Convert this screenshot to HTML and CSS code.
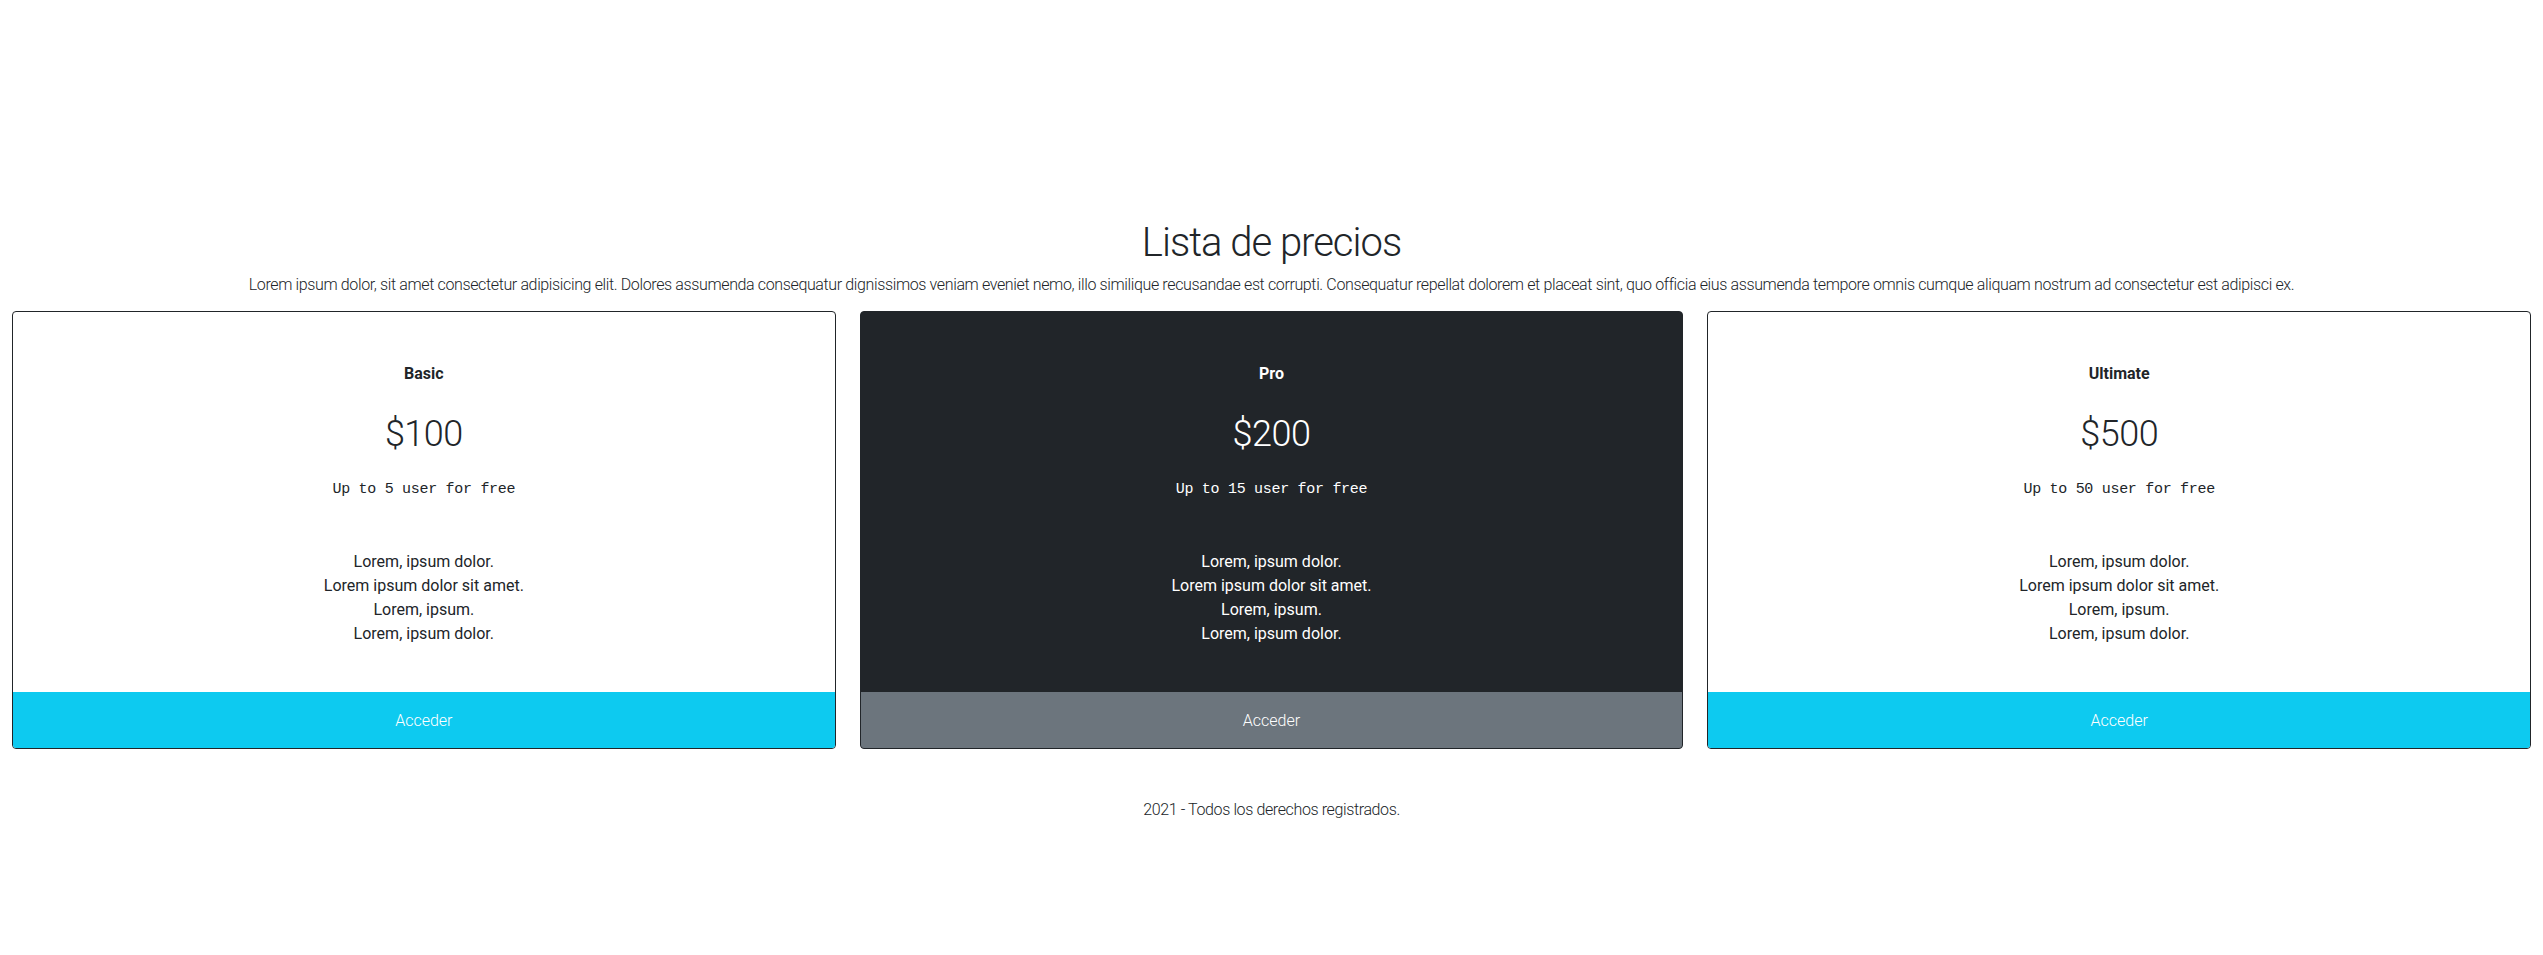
FILE: index.html
```html
<!DOCTYPE html>
<html lang="es">
<head>
<meta charset="utf-8">
<title>Lista de precios</title>
<link rel="stylesheet" href="styles.css">
</head>
<body>
<main class="pricing">
  <header class="intro">
    <h1 class="intro-title">Lista de precios</h1>
    <p class="intro-lead">Lorem ipsum dolor, sit amet consectetur adipisicing elit. Dolores assumenda consequatur dignissimos veniam eveniet nemo, illo similique recusandae est corrupti. Consequatur repellat dolorem et placeat sint, quo officia eius assumenda tempore omnis cumque aliquam nostrum ad consectetur est adipisci ex.</p>
  </header>
  <section class="plans">
    <article class="plan">
      <div class="plan-body">
        <p class="plan-name">Basic</p>
        <p class="plan-price">$100</p>
        <p class="plan-users">Up to 5 user for free</p>
        <ul class="plan-features">
          <li>Lorem, ipsum dolor.</li>
          <li>Lorem ipsum dolor sit amet.</li>
          <li>Lorem, ipsum.</li>
          <li>Lorem, ipsum dolor.</li>
        </ul>
      </div>
      <a class="plan-btn plan-btn-info" href="#">Acceder</a>
    </article>
    <article class="plan plan-dark">
      <div class="plan-body">
        <p class="plan-name">Pro</p>
        <p class="plan-price">$200</p>
        <p class="plan-users">Up to 15 user for free</p>
        <ul class="plan-features">
          <li>Lorem, ipsum dolor.</li>
          <li>Lorem ipsum dolor sit amet.</li>
          <li>Lorem, ipsum.</li>
          <li>Lorem, ipsum dolor.</li>
        </ul>
      </div>
      <a class="plan-btn plan-btn-secondary" href="#">Acceder</a>
    </article>
    <article class="plan">
      <div class="plan-body">
        <p class="plan-name">Ultimate</p>
        <p class="plan-price">$500</p>
        <p class="plan-users">Up to 50 user for free</p>
        <ul class="plan-features">
          <li>Lorem, ipsum dolor.</li>
          <li>Lorem ipsum dolor sit amet.</li>
          <li>Lorem, ipsum.</li>
          <li>Lorem, ipsum dolor.</li>
        </ul>
      </div>
      <a class="plan-btn plan-btn-info" href="#">Acceder</a>
    </article>
  </section>
  <footer class="site-footer">2021 - Todos los derechos registrados.</footer>
</main>
</body>
</html>
```

FILE: styles.css
```css
* { box-sizing: border-box; }

body {
  margin: 0;
  font-family: Roboto, "Liberation Sans", sans-serif;
  font-size: 16px;
  line-height: 1.5;
  color: #212529;
  background: #fff;
}

.intro {
  padding-top: 219px;
  text-align: center;
}

.intro-title {
  margin: 0 0 6px;
  font-size: 40px;
  line-height: 48px;
  font-weight: 300;
  letter-spacing: -1px;
}

.intro-lead {
  margin: 0 0 14px;
  font-weight: 300;
  font-size: 16px;
  line-height: 24px;
  letter-spacing: -0.37px;
}

.plans {
  display: grid;
  grid-template-columns: repeat(3, 1fr);
  gap: 24px;
  padding: 0 12px;
}

.plan {
  display: flex;
  flex-direction: column;
  border: 1px solid #212529;
  border-radius: 4px;
  overflow: hidden;
  background: #fff;
  text-align: center;
}

.plan-dark {
  background: #212529;
  color: #fff;
}

.plan-body {
  padding: 50px 48px 46px;
  flex: 1;
}

.plan-name {
  margin: 0 0 27px;
  font-weight: 700;
  line-height: 24px;
}

.plan-price {
  margin: 0 0 22px;
  font-size: 36px;
  line-height: 43px;
  font-weight: 300;
  letter-spacing: -0.5px;
}

.plan-users {
  margin: 0 0 48px;
  font-family: "Liberation Mono", "DejaVu Sans Mono", monospace;
  font-size: 15px;
  letter-spacing: -0.3px;
  line-height: 24px;
}

.plan-features {
  list-style: none;
  margin: 0;
  padding: 0;
  line-height: 24px;
}

.plan-btn {
  display: block;
  height: 56px;
  line-height: 57px;
  color: #fff;
  text-decoration: none;
  font-weight: 300;
}

.plan-btn-info { background: #0dcaf0; }
.plan-btn-secondary { background: #6c757d; }

.site-footer {
  margin-top: 49px;
  text-align: center;
  font-weight: 300;
  line-height: 24px;
  letter-spacing: -0.38px;
}
```
